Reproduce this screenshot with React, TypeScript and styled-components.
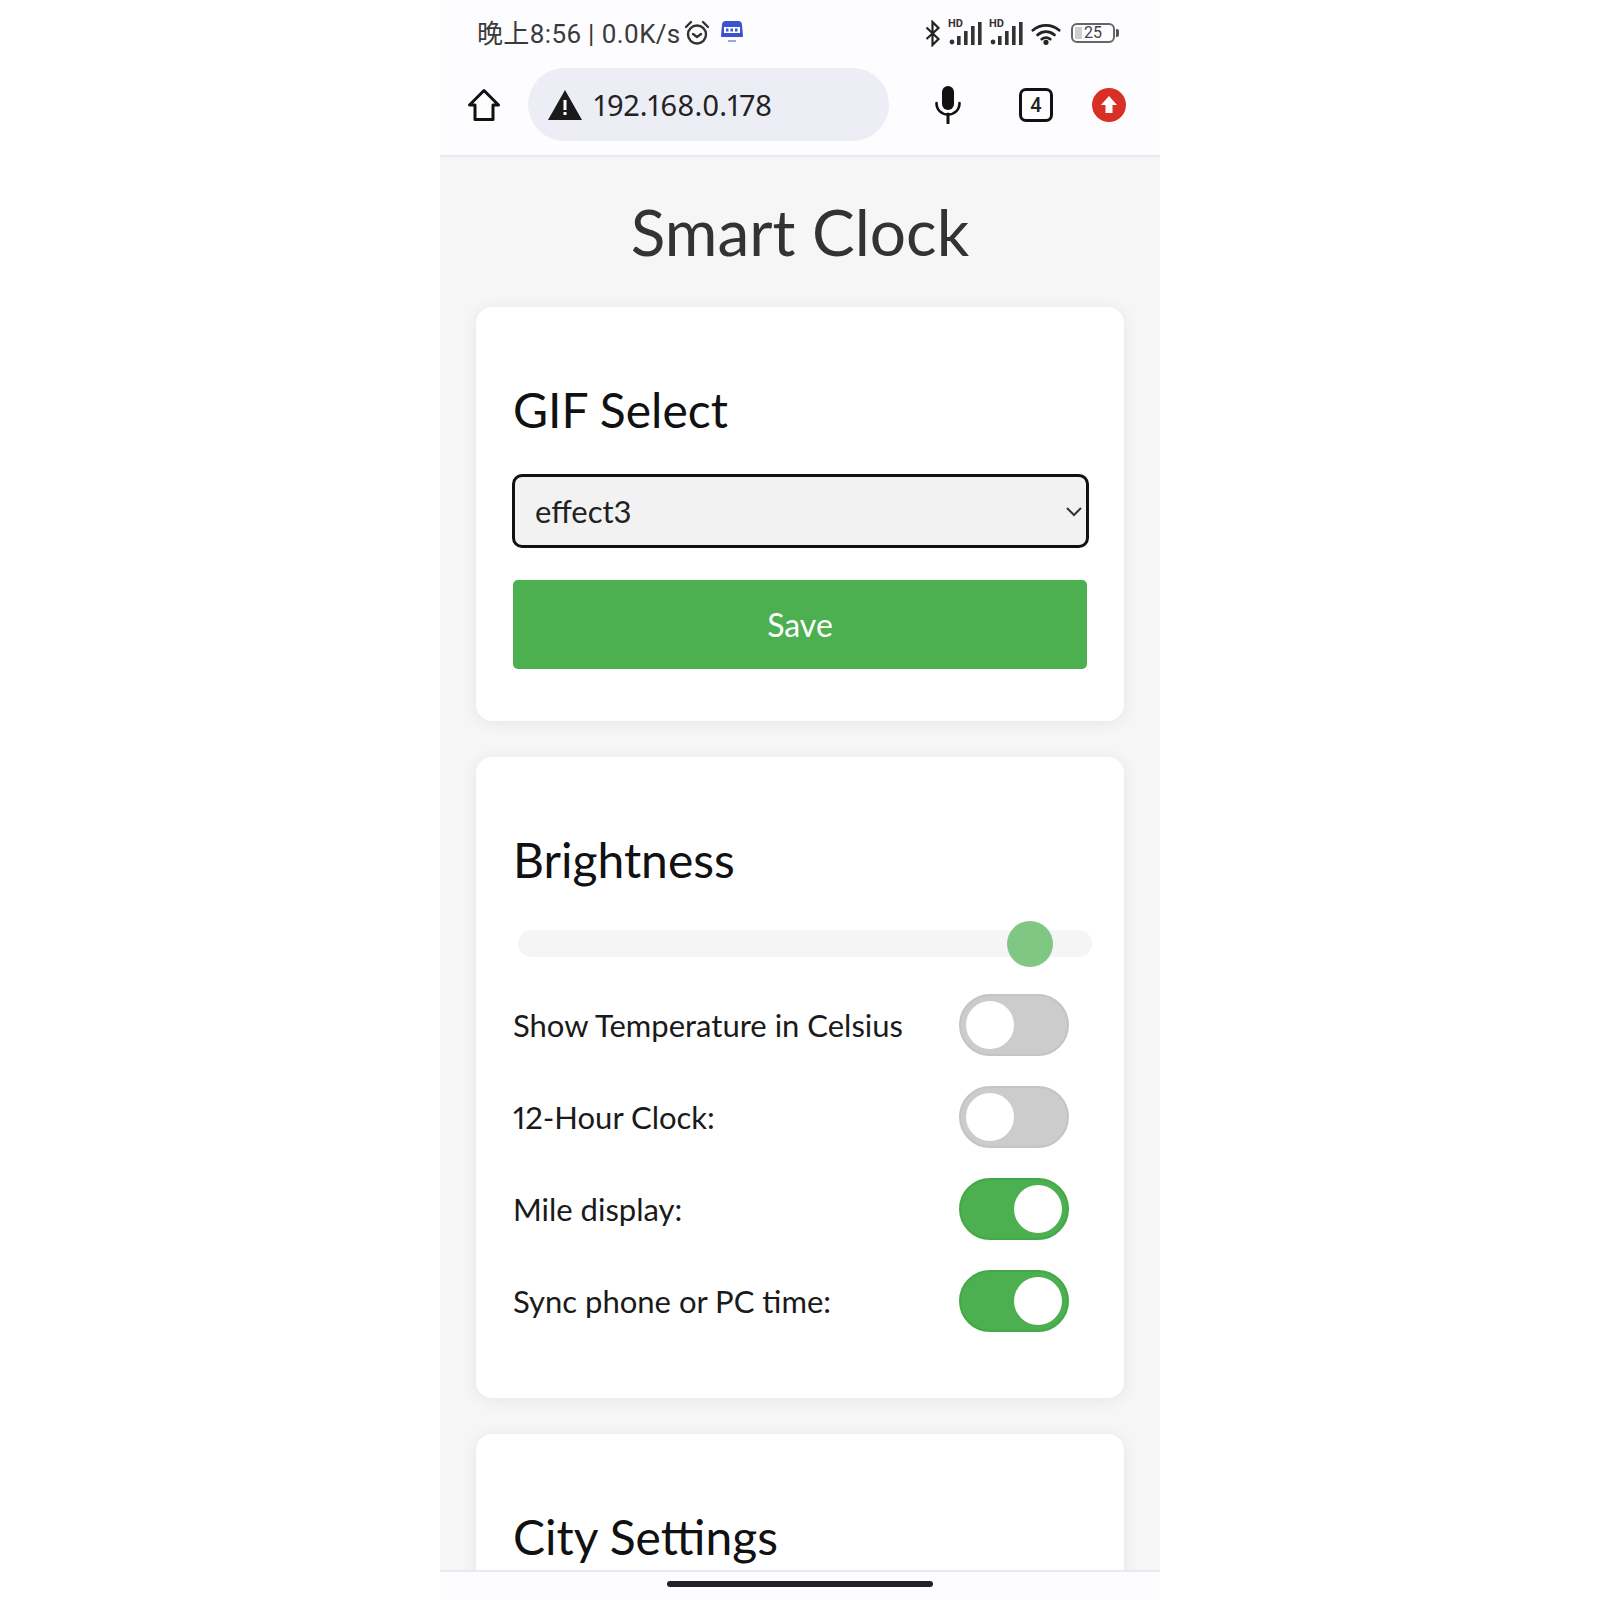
import styled, { createGlobalStyle } from "styled-components";

const GlobalStyle = createGlobalStyle`
  html, body {
    margin: 0;
    padding: 0;
    background: #ffffff;
  }
  * {
    box-sizing: border-box;
  }
`;

const Page = styled.div`
  width: 1600px;
  height: 1600px;
  display: flex;
  justify-content: center;
  background: #ffffff;
`;

const Phone = styled.div`
  width: 720px;
  height: 1600px;
  display: flex;
  flex-direction: column;
  overflow: hidden;
  background: #f6f6f6;
  font-family: Lato, "Noto Sans", sans-serif;
  font-feature-settings: "pnum";
`;

const Header = styled.header`
  height: 157px;
  flex: none;
  background: #fdfcff;
  border-bottom: 2px solid #e9e9ee;
`;

const StatusBar = styled.div`
  height: 66px;
  padding: 0 42px 0 37px;
  display: flex;
  align-items: center;
  justify-content: space-between;
  color: #3a3a3a;
`;

const StatusGroup = styled.div<{ $gap: number }>`
  display: flex;
  align-items: center;
  gap: ${(p) => p.$gap}px;
`;

const StatusText = styled.span`
  margin-bottom: 4px;
  font-family: Roboto, "Noto Sans CJK SC", sans-serif;
  font-size: 26px;
  letter-spacing: 0.25px;
  white-space: nowrap;
`;

const SimSlot = styled.span`
  display: inline-flex;
  margin-left: 6px;
  margin-bottom: 3px;
`;

const SignalWrap = styled.span`
  position: relative;
  display: inline-flex;
  width: 34px;
  height: 24px;
`;

const HdMark = styled.span`
  position: absolute;
  left: -1px;
  top: -4px;
  font-family: Roboto, sans-serif;
  font-size: 11px;
  font-weight: 700;
  color: #333;
`;

const Battery = styled.span`
  position: relative;
  width: 44px;
  height: 20px;
  margin: 0 3px 0 3px;
  border: 2px solid #666;
  border-radius: 6px;
  display: flex;
  align-items: center;
  justify-content: center;
  font-family: Roboto, sans-serif;
  font-size: 16px;
  line-height: 1;
  color: #444;

  &::before {
    content: "";
    position: absolute;
    left: 2px;
    top: 2px;
    bottom: 2px;
    width: 7px;
    background: #cfcfcf;
  }

  &::after {
    content: "";
    position: absolute;
    right: -6px;
    top: 4px;
    width: 3px;
    height: 8px;
    background: #555;
    border-radius: 0 2px 2px 0;
  }
`;

const BrowserBar = styled.div`
  height: 89px;
  padding: 2px 34px 0 27px;
  display: flex;
  align-items: flex-start;
`;

const HomeButton = styled.div`
  width: 34px;
  height: 73px;
  flex: none;
  display: flex;
  align-items: center;
  justify-content: center;
  margin-right: 27px;
`;

const UrlPill = styled.div`
  width: 361px;
  height: 73px;
  flex: none;
  border-radius: 37px;
  background: #ecedf5;
  display: flex;
  align-items: center;
  gap: 12px;
  padding-left: 20px;
  font-family: "Noto Sans", sans-serif;
  font-size: 29px;
  letter-spacing: 0.1px;
  color: #222;
`;

const BarActions = styled.div`
  flex: 1;
  height: 73px;
  display: flex;
  align-items: center;
  justify-content: flex-end;
  gap: 39px;
`;

const MicSlot = styled.div`
  display: flex;
  margin-right: 18px;
`;

const TabCount = styled.div`
  width: 34px;
  height: 34px;
  border: 3px solid #111;
  border-radius: 7px;
  display: flex;
  align-items: center;
  justify-content: center;
  font-family: Roboto, sans-serif;
  font-size: 20px;
  font-weight: 500;
  color: #222;
`;

const Content = styled.main`
  flex: 1;
  min-height: 0;
  overflow: hidden;
  padding: 0 36px;
`;

const Title = styled.h1`
  margin: 37px 0 38px;
  text-align: center;
  font-size: 64px;
  line-height: 75px;
  font-weight: 400;
  color: #333333;
`;

const Card = styled.section`
  background: #ffffff;
  border-radius: 16px;
  padding: 73px 36px 52px 37px;
  margin-bottom: 36px;
  box-shadow: 0 2px 16px rgba(0, 0, 0, 0.07);
`;

const CardTitle = styled.h2`
  margin: 0 0 34px;
  font-size: 48px;
  line-height: 60px;
  font-weight: 400;
  color: #111111;
`;

const SelectWrap = styled.div`
  position: relative;
  width: 577px;
  margin-left: -1px;
`;

const Select = styled.select`
  display: block;
  appearance: none;
  width: 100%;
  height: 74px;
  padding: 0 20px;
  border: 3px solid #111111;
  border-radius: 10px;
  background: #f2f2f2;
  font-family: Lato, sans-serif;
  font-size: 31px;
  color: #222222;
`;

const ChevronSlot = styled.span`
  position: absolute;
  right: 6px;
  top: 32px;
  display: flex;
  pointer-events: none;
`;

const SaveButton = styled.button`
  display: block;
  width: 574px;
  height: 89px;
  margin-top: 32px;
  border: none;
  border-radius: 5px;
  background: #4caf50;
  font-family: Lato, sans-serif;
  font-size: 32px;
  color: #ffffff;
`;

const Slider = styled.input`
  display: block;
  appearance: none;
  width: 574px;
  height: 27px;
  margin: 40px 0 37px 5px;
  border-radius: 14px;
  background: #f5f5f5;

  &::-webkit-slider-thumb {
    appearance: none;
    width: 46px;
    height: 46px;
    border-radius: 50%;
    background: #81c784;
  }
`;

const ToggleList = styled.div`
  display: flex;
  flex-direction: column;
  gap: 30px;
  margin-bottom: 14px;
`;

const ToggleRow = styled.div`
  display: flex;
  align-items: center;
  justify-content: space-between;
  padding-right: 19px;
  height: 62px;
`;

const RowLabel = styled.span`
  font-size: 31px;
  color: #1a1a1a;
`;

const Toggle = styled.span<{ $on: boolean }>`
  width: 110px;
  height: 62px;
  padding: 0 5px;
  border: 2px solid ${(p) => (p.$on ? "#43a947" : "#c4c4c4")};
  border-radius: 31px;
  display: flex;
  align-items: center;
  justify-content: ${(p) => (p.$on ? "flex-end" : "flex-start")};
  background: ${(p) => (p.$on ? "#4caf50" : "#cccccc")};
`;

const Knob = styled.span`
  width: 48px;
  height: 48px;
  border-radius: 50%;
  background: #ffffff;
`;

const BottomBar = styled.footer`
  height: 30px;
  flex: none;
  background: #fdfcff;
  border-top: 2px solid #e9e9ee;
  display: flex;
  justify-content: center;
  padding-top: 9px;
`;

const HomeIndicator = styled.div`
  width: 266px;
  height: 6px;
  border-radius: 3px;
  background: #222222;
`;

const AlarmIcon = () => (
  <svg width="26" height="26" viewBox="0 0 26 26" fill="none" stroke="#333" strokeWidth="2.4" strokeLinecap="round">
    <circle cx="13" cy="14.5" r="9" />
    <path d="M9 14l4 3 4-3" />
    <path d="M2 7l5-5M24 7l-5-5" />
  </svg>
);

const SimIcon = () => (
  <svg width="24" height="24" viewBox="0 0 24 24">
    <path d="M6 1h12a4 4 0 0 1 4 4l1 11a1 1 0 0 1-1 1H2a1 1 0 0 1-1-1L2 5a4 4 0 0 1 4-4z" fill="#3c52d0" />
    <rect x="4" y="7" width="16" height="6" fill="#ffffff" />
    <rect x="6" y="8.500" width="2.500" height="3" fill="#3c52d0" />
    <rect x="10.500" y="8.500" width="2.500" height="3" fill="#3c52d0" />
    <rect x="15" y="8.500" width="2.500" height="3" fill="#3c52d0" />
    <rect x="8" y="20" width="8" height="2" fill="#9aa6e6" />
  </svg>
);

const BluetoothIcon = () => (
  <svg width="18" height="27" viewBox="0 0 16 27" fill="none" stroke="#222" strokeWidth="2.2">
    <path d="M1.5 7.5l12 11.5-6 6V2l6 6-12 11" />
  </svg>
);

const SignalBars = () => (
  <svg width="34" height="24" viewBox="0 0 34 24" fill="#333">
    <circle cx="3" cy="21" r="2.4" />
    <rect x="8" y="15" width="3.6" height="9" />
    <rect x="15" y="10" width="3.6" height="14" />
    <rect x="22" y="5" width="3.6" height="19" />
    <rect x="29" y="1" width="3.6" height="23" />
  </svg>
);

const WifiIcon = () => (
  <svg width="30" height="23" viewBox="0 0 32 24" fill="none" stroke="#222" strokeWidth="3" strokeLinecap="round">
    <path d="M2 8.5c8-7 20-7 28 0" />
    <path d="M7 13.5c5.500-4.500 12.500-4.500 18 0" />
    <path d="M11.500 18c3-2.200 6-2.200 9 0" />
    <circle cx="16" cy="21.500" r="1.300" fill="#222" />
  </svg>
);

const HomeIcon = () => (
  <svg width="34" height="34" viewBox="0 0 34 34" fill="none" stroke="#111" strokeWidth="3" strokeLinejoin="round">
    <path d="M17 2.500L2.500 17H8v14.500h18V17h5.500z" />
  </svg>
);

const WarningIcon = () => (
  <svg width="34" height="30" viewBox="0 0 34 30">
    <path d="M17 0l17 30H0z" fill="#1a1a1a" />
    <rect x="15.500" y="10" width="3" height="10" fill="#fff" />
    <rect x="15.500" y="22" width="3" height="3" fill="#fff" />
  </svg>
);

const MicIcon = () => (
  <svg width="28" height="38" viewBox="0 0 28 38" fill="none">
    <rect x="8" y="0" width="12" height="24" rx="6" fill="#111" />
    <path d="M2.500 17c0 7 5 11.500 11.500 11.500S25.500 24 25.500 17" stroke="#111" strokeWidth="2.600" strokeLinecap="round" />
    <path d="M14 28v9" stroke="#111" strokeWidth="3" strokeLinecap="round" />
  </svg>
);

const UpdateIcon = () => (
  <svg width="34" height="34" viewBox="0 0 34 34">
    <circle cx="17" cy="17" r="17" fill="#d93025" />
    <path d="M17 8l8 9h-4.500v8h-7v-8H9z" fill="#fff" />
  </svg>
);

const ChevronIcon = () => (
  <svg width="18" height="12" viewBox="0 0 18 12" fill="none" stroke="#333" strokeWidth="2">
    <path d="M2 2l7 7 7-7" />
  </svg>
);

const Signal = () => (
  <SignalWrap>
    <HdMark>HD</HdMark>
    <SignalBars />
  </SignalWrap>
);

const rows = [
  { label: "Show Temperature in Celsius", on: false },
  { label: "12-Hour Clock:", on: false },
  { label: "Mile display:", on: true },
  { label: "Sync phone or PC time:", on: true },
];

function App() {
  return (
    <Page>
      <GlobalStyle />
      <Phone>
        <Header>
          <StatusBar>
            <StatusGroup $gap={4}>
              <StatusText>晚上8:56 | 0.0K/s</StatusText>
              <AlarmIcon />
              <SimSlot>
                <SimIcon />
              </SimSlot>
            </StatusGroup>
            <StatusGroup $gap={7}>
              <BluetoothIcon />
              <Signal />
              <Signal />
              <WifiIcon />
              <Battery>25</Battery>
            </StatusGroup>
          </StatusBar>
          <BrowserBar>
            <HomeButton>
              <HomeIcon />
            </HomeButton>
            <UrlPill>
              <WarningIcon />
              192.168.0.178
            </UrlPill>
            <BarActions>
              <MicSlot>
                <MicIcon />
              </MicSlot>
              <TabCount>4</TabCount>
              <UpdateIcon />
            </BarActions>
          </BrowserBar>
        </Header>
        <Content>
          <Title>Smart Clock</Title>
          <Card>
            <CardTitle>GIF Select</CardTitle>
            <SelectWrap>
              <Select defaultValue="effect3">
                <option value="effect3">effect3</option>
              </Select>
              <ChevronSlot>
                <ChevronIcon />
              </ChevronSlot>
            </SelectWrap>
            <SaveButton>Save</SaveButton>
          </Card>
          <Card>
            <CardTitle>Brightness</CardTitle>
            <Slider type="range" min={0} max={100} step={0.1} defaultValue={92.6} />
            <ToggleList>
              {rows.map((row) => (
                <ToggleRow key={row.label}>
                  <RowLabel>{row.label}</RowLabel>
                  <Toggle $on={row.on}>
                    <Knob />
                  </Toggle>
                </ToggleRow>
              ))}
            </ToggleList>
          </Card>
          <Card>
            <CardTitle>City Settings</CardTitle>
          </Card>
        </Content>
        <BottomBar>
          <HomeIndicator />
        </BottomBar>
      </Phone>
    </Page>
  );
}

export default App;
